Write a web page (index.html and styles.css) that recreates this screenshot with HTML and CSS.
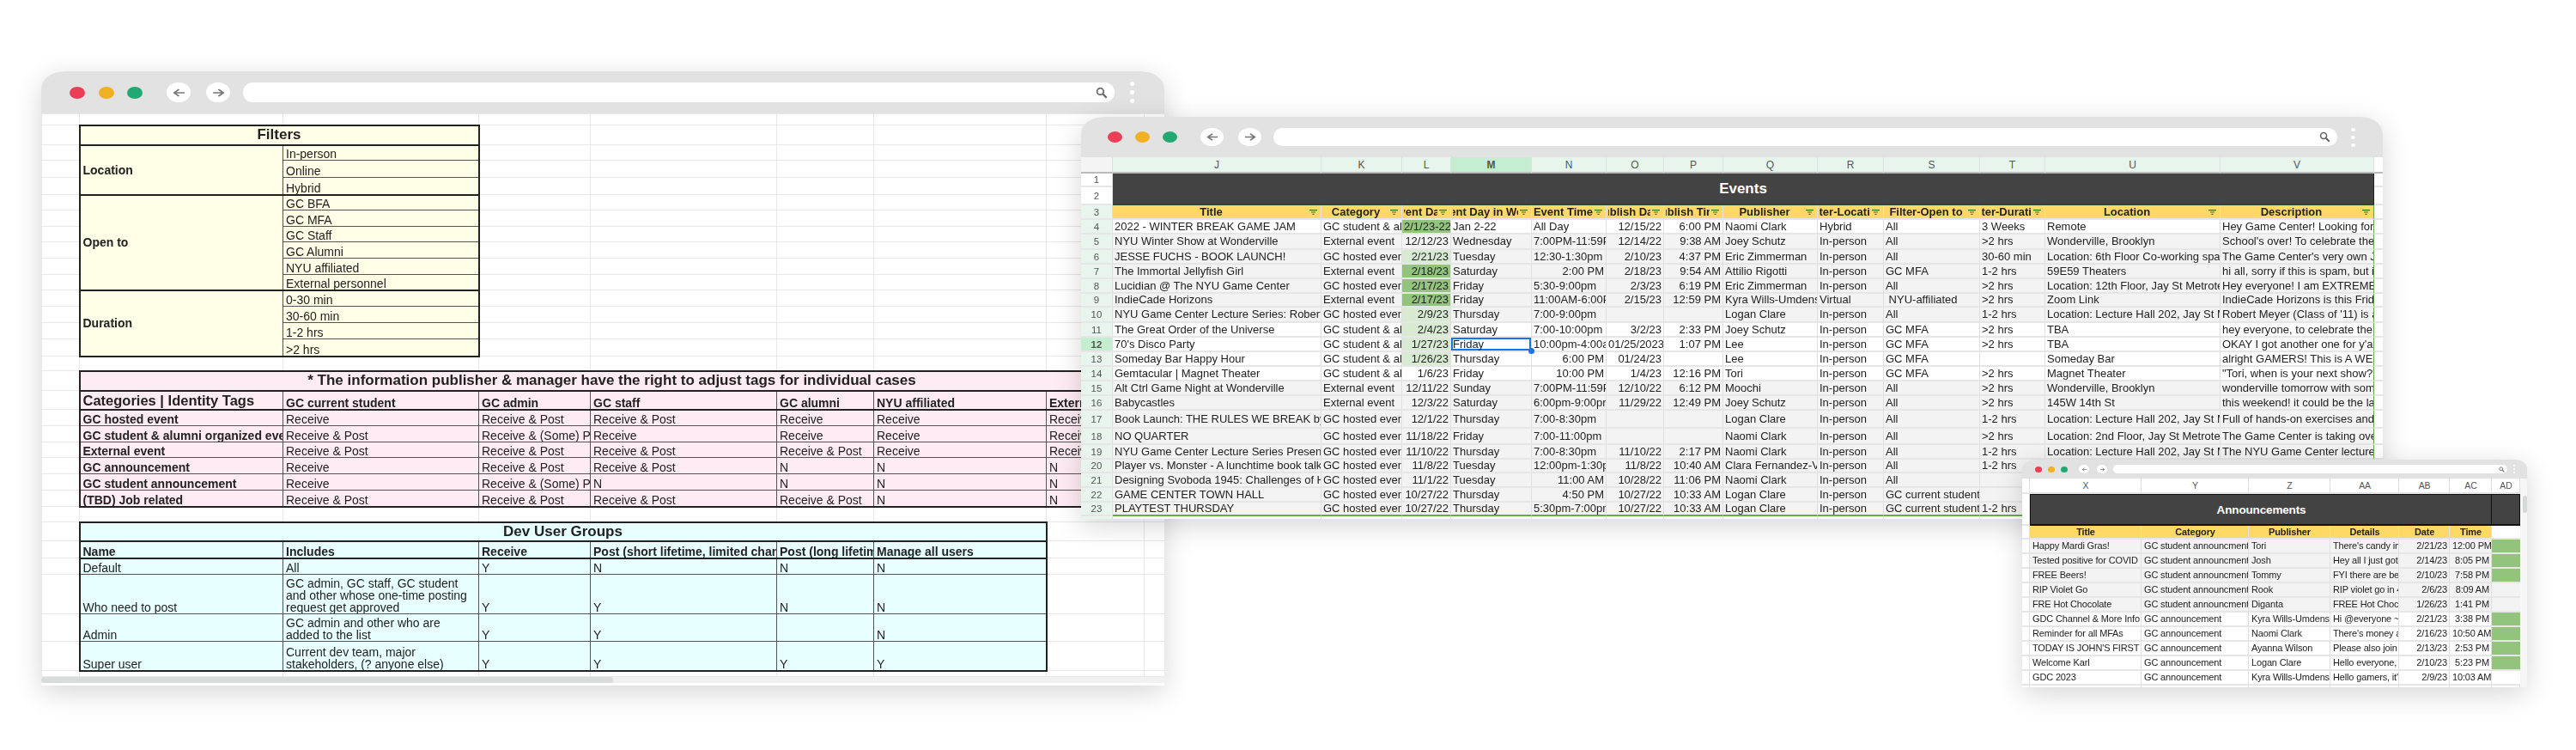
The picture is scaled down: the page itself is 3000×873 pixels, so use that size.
FILE: index.html
```html
<!DOCTYPE html>
<html lang="en">
  <head>
    <meta charset="UTF-8" />
    <title>Game Center spreadsheets</title>
    <link rel="stylesheet" href="styles.css">
  </head>
  <body>
    <svg class="defs" width="0" height="0">
      <symbol id="fn" viewBox="0 0 9 6"><path d="M0 .6h9M2 3h5M3.5 5.4h2" stroke="#38761d" stroke-width="1.1" fill="none"/></symbol>
      <symbol id="back" viewBox="0 0 24 24" preserveAspectRatio="none"><path d="M21 12H4M12 4l-8 8 8 8" stroke="#777" stroke-width="3" fill="none"/></symbol>
      <symbol id="fwd" viewBox="0 0 24 24" preserveAspectRatio="none"><path d="M3 12h17M12 4l8 8-8 8" stroke="#777" stroke-width="3" fill="none"/></symbol>
      <symbol id="search" viewBox="0 0 16 16"><circle cx="6.2" cy="6.2" r="4.3" stroke="#666" stroke-width="2" fill="none"/><path d="M9.5 9.5l5 5" stroke="#666" stroke-width="2.6"/></symbol>
    </svg>

    <div id="app">

      <!-- filters window -->
      <section class="win win-filters">
        <div class="bar">
          <i class="dot red"></i><i class="dot yellow"></i><i class="dot green"></i>
          <span class="nav first"><svg><use href="#back"/></svg></span>
          <span class="nav"><svg><use href="#fwd"/></svg></span>
          <div class="address"><svg><use href="#search"/></svg></div>
          <div class="kebab"><i></i><i></i><i></i></div>
        </div>
        <table class="sheet tags">
          <colgroup><col class="c0"><col class="c1"><col class="c2"><col class="c3"><col class="c4"><col class="c5"><col class="c6"><col class="c7"><col class="c8"></colgroup>
          <tr class="r13"><td></td><td></td><td></td><td></td><td></td><td></td><td></td><td></td><td></td></tr>
          <tr class="r23"><td></td><td class="d cream title top el er" colspan="2">Filters</td><td></td><td></td><td></td><td></td><td></td><td></td></tr>
          <tr class="r18"><td></td><td class="d cream b mid top el" rowspan="3">Location</td><td class="d cream top er">In-person</td><td></td><td></td><td></td><td></td><td></td><td></td></tr>
          <tr class="r20"><td></td><td class="d cream er">Online</td><td></td><td></td><td></td><td></td><td></td><td></td></tr>
          <tr class="r20"><td></td><td class="d cream er">Hybrid</td><td></td><td></td><td></td><td></td><td></td><td></td></tr>
          <tr class="r18"><td></td><td class="d cream b mid top el" rowspan="6">Open to</td><td class="d cream top er">GC BFA</td><td></td><td></td><td></td><td></td><td></td><td></td></tr>
          <tr class="r19"><td></td><td class="d cream er">GC MFA</td><td></td><td></td><td></td><td></td><td></td><td></td></tr>
          <tr class="r18"><td></td><td class="d cream er">GC Staff</td><td></td><td></td><td></td><td></td><td></td><td></td></tr>
          <tr class="r19"><td></td><td class="d cream er">GC Alumni</td><td></td><td></td><td></td><td></td><td></td><td></td></tr>
          <tr class="r19"><td></td><td class="d cream er">NYU affiliated</td><td></td><td></td><td></td><td></td><td></td><td></td></tr>
          <tr class="r18"><td></td><td class="d cream er">External personnel</td><td></td><td></td><td></td><td></td><td></td><td></td></tr>
          <tr class="r19"><td></td><td class="d cream b mid top el eb" rowspan="4">Duration</td><td class="d cream top er">0-30 min</td><td></td><td></td><td></td><td></td><td></td><td></td></tr>
          <tr class="r19"><td></td><td class="d cream er">30-60 min</td><td></td><td></td><td></td><td></td><td></td><td></td></tr>
          <tr class="r19"><td></td><td class="d cream er">1-2 hrs</td><td></td><td></td><td></td><td></td><td></td><td></td></tr>
          <tr class="r20"><td></td><td class="d cream er eb">&gt;2 hrs</td><td></td><td></td><td></td><td></td><td></td><td></td></tr>
          <tr class="r17"><td></td><td></td><td></td><td></td><td></td><td></td><td></td><td></td><td></td></tr>

          <tr class="r23"><td></td><td class="d pk title top el er" colspan="7">* The information publisher &amp; manager have the right to adjust tags for individual cases</td><td></td></tr>
          <tr class="r22"><td></td><td class="d pk big top el">Categories | Identity Tags</td><td class="d pk b top">GC current student</td><td class="d pk b top">GC admin</td><td class="d pk b top">GC staff</td><td class="d pk b top">GC alumni</td><td class="d pk b top">NYU affiliated</td><td class="d pk b top er">External personnel</td><td></td></tr>
          <tr class="r19 tp"><td></td><td class="d pk b el">GC hosted event</td><td class="d pk">Receive</td><td class="d pk">Receive &amp; Post</td><td class="d pk">Receive &amp; Post</td><td class="d pk">Receive</td><td class="d pk">Receive</td><td class="d pk er">Receive</td><td></td></tr>
          <tr class="r19"><td></td><td class="d pk b el">GC student &amp; alumni organized event</td><td class="d pk">Receive &amp; Post</td><td class="d pk">Receive &amp; (Some) Post</td><td class="d pk">Receive</td><td class="d pk">Receive</td><td class="d pk">Receive</td><td class="d pk er">Receive</td><td></td></tr>
          <tr class="r18"><td></td><td class="d pk b el">External event</td><td class="d pk">Receive &amp; Post</td><td class="d pk">Receive &amp; Post</td><td class="d pk">Receive &amp; Post</td><td class="d pk">Receive &amp; Post</td><td class="d pk">Receive</td><td class="d pk er">Receive</td><td></td></tr>
          <tr class="r19"><td></td><td class="d pk b el">GC announcement</td><td class="d pk">Receive</td><td class="d pk">Receive &amp; Post</td><td class="d pk">Receive &amp; Post</td><td class="d pk">N</td><td class="d pk">N</td><td class="d pk er">N</td><td></td></tr>
          <tr class="r19"><td></td><td class="d pk b el">GC student announcement</td><td class="d pk">Receive</td><td class="d pk">Receive &amp; (Some) Post</td><td class="d pk">N</td><td class="d pk">N</td><td class="d pk">N</td><td class="d pk er">N</td><td></td></tr>
          <tr class="r19"><td></td><td class="d pk b el eb">(TBD) Job related</td><td class="d pk eb">Receive &amp; Post</td><td class="d pk eb">Receive &amp; Post</td><td class="d pk eb">Receive &amp; Post</td><td class="d pk eb">Receive &amp; Post</td><td class="d pk eb">N</td><td class="d pk er eb">N</td><td></td></tr>
          <tr class="r18"><td></td><td></td><td></td><td></td><td></td><td></td><td></td><td></td><td></td></tr>

          <tr class="r22"><td></td><td class="d cy title top el er" colspan="6">Dev User Groups</td><td></td><td></td></tr>
          <tr class="r20"><td></td><td class="d cy b top el">Name</td><td class="d cy b top">Includes</td><td class="d cy b top">Receive</td><td class="d cy b top">Post (short lifetime, limited channels)</td><td class="d cy b top">Post (long lifetime)</td><td class="d cy b top er">Manage all users</td><td></td><td></td></tr>
          <tr class="r19 tp"><td></td><td class="d cy el">Default</td><td class="d cy">All</td><td class="d cy">Y</td><td class="d cy">N</td><td class="d cy">N</td><td class="d cy er">N</td><td></td><td></td></tr>
          <tr class="r46"><td></td><td class="d cy el">Who need to post</td><td class="d cy wrap">GC admin, GC staff, GC student and other whose one-time posting request get approved</td><td class="d cy">Y</td><td class="d cy">Y</td><td class="d cy">N</td><td class="d cy er">N</td><td></td><td></td></tr>
          <tr class="r32"><td></td><td class="d cy el">Admin</td><td class="d cy wrap">GC admin and other who are added to the list</td><td class="d cy">Y</td><td class="d cy">Y</td><td class="d cy"></td><td class="d cy er">N</td><td></td><td></td></tr>
          <tr class="r34"><td></td><td class="d cy el eb">Super user</td><td class="d cy wrap eb">Current dev team, major stakeholders, (? anyone else)</td><td class="d cy eb">Y</td><td class="d cy eb">Y</td><td class="d cy eb">Y</td><td class="d cy er eb">Y</td><td></td><td></td></tr>
          <tr class="r7"><td></td><td></td><td></td><td></td><td></td><td></td><td></td><td></td><td></td></tr>
        </table>
        <div class="scroll"><div class="thumb"></div></div>
      </section>

      <!-- events window -->
      <section class="win win-events">
        <div class="bar">
          <i class="dot red"></i><i class="dot yellow"></i><i class="dot green"></i>
          <span class="nav first"><svg><use href="#back"/></svg></span>
          <span class="nav"><svg><use href="#fwd"/></svg></span>
          <div class="address"><svg><use href="#search"/></svg></div>
          <div class="kebab"><i></i><i></i><i></i></div>
        </div>
        <table class="sheet events">
          <colgroup><col class="cn"><col class="cj"><col class="ck"><col class="cl"><col class="cm"><col class="cN"><col class="co"><col class="cp"><col class="cq"><col class="cR"><col class="cs"><col class="ct"><col class="cu"><col class="cv"><col class="cx"></colgroup>
          <tr class="letters"><td class="corner"></td><td>J</td><td>K</td><td>L</td><td class="on">M</td><td>N</td><td>O</td><td>P</td><td>Q</td><td>R</td><td>S</td><td>T</td><td>U</td><td>V</td><td class="blank"></td></tr>
          <tr class="b1"><td class="n">1</td><td class="banner" colspan="13" rowspan="2">Events</td><td class="blank"></td></tr>
          <tr class="b2"><td class="n">2</td><td class="blank"></td></tr>
          <tr class="heads">
            <td class="n">3</td>
            <td><div class="h"><span>Title</span><svg><use href="#fn"/></svg></div></td>
            <td><div class="h"><span>Category</span><svg><use href="#fn"/></svg></div></td>
            <td><div class="h"><span>Event Date</span><svg><use href="#fn"/></svg></div></td>
            <td><div class="h"><span>Event Day in Week</span><svg><use href="#fn"/></svg></div></td>
            <td><div class="h"><span>Event Time</span><svg><use href="#fn"/></svg></div></td>
            <td><div class="h"><span>Publish Date</span><svg><use href="#fn"/></svg></div></td>
            <td><div class="h"><span>Publish Time</span><svg><use href="#fn"/></svg></div></td>
            <td><div class="h"><span>Publisher</span><svg><use href="#fn"/></svg></div></td>
            <td><div class="h"><span>Filter-Location</span><svg><use href="#fn"/></svg></div></td>
            <td><div class="h"><span>Filter-Open to</span><svg><use href="#fn"/></svg></div></td>
            <td><div class="h"><span>Filter-Duration</span><svg><use href="#fn"/></svg></div></td>
            <td><div class="h"><span>Location</span><svg><use href="#fn"/></svg></div></td>
            <td class="edge"><div class="h"><span>Description</span><svg><use href="#fn"/></svg></div></td>
            <td class="blank"></td>
          </tr>
          <tr><td class="n">4</td><td>2022 - WINTER BREAK GAME JAM</td><td>GC student &amp; alumni organized event</td><td class="g1">2/1/23-22/1/23</td><td>Jan 2-22</td><td>All Day</td><td class="r">12/15/22</td><td class="r">6:00 PM</td><td>Naomi Clark</td><td>Hybrid</td><td>All</td><td>3 Weeks</td><td>Remote</td><td class="edge">Hey Game Center! Looking for something to do</td><td class="blank"></td></tr>
          <tr class="gy"><td class="n">5</td><td>NYU Winter Show at Wonderville</td><td>External event</td><td class="r">12/12/23</td><td>Wednesday</td><td>7:00PM-11:59PM</td><td class="r">12/14/22</td><td class="r">9:38 AM</td><td>Joey Schutz</td><td>In-person</td><td>All</td><td>&gt;2 hrs</td><td>Wonderville, Brooklyn</td><td class="edge">School's over! To celebrate the end of the year</td><td class="blank"></td></tr>
          <tr class="gy"><td class="n">6</td><td>JESSE FUCHS - BOOK LAUNCH!</td><td>GC hosted event</td><td class="r g2">2/21/23</td><td>Tuesday</td><td>12:30-1:30pm</td><td class="r">2/10/23</td><td class="r">4:37 PM</td><td>Eric Zimmerman</td><td>In-person</td><td>All</td><td>30-60 min</td><td>Location: 6th Floor Co-working space, Jay St Metrotech</td><td class="edge">The Game Center's very own Jesse Fuchs</td><td class="blank"></td></tr>
          <tr class="gy"><td class="n">7</td><td>The Immortal Jellyfish Girl</td><td>External event</td><td class="r g1">2/18/23</td><td>Saturday</td><td class="r">2:00 PM</td><td class="r">2/18/23</td><td class="r">9:54 AM</td><td>Attilio Rigotti</td><td>In-person</td><td>GC MFA</td><td>1-2 hrs</td><td>59E59 Theaters</td><td class="edge">hi all, sorry if this is spam, but i have a</td><td class="blank"></td></tr>
          <tr class="gy"><td class="n">8</td><td>Lucidian @ The NYU Game Center</td><td>GC hosted event</td><td class="r g1">2/17/23</td><td>Friday</td><td>5:30-9:00pm</td><td class="r">2/3/23</td><td class="r">6:19 PM</td><td>Eric Zimmerman</td><td>In-person</td><td>All</td><td>&gt;2 hrs</td><td>Location: 12th Floor, Jay St Metrotech</td><td class="edge">Hey everyone! I am EXTREMELY EXCITED</td><td class="blank"></td></tr>
          <tr class="gy"><td class="n">9</td><td>IndieCade Horizons</td><td>External event</td><td class="r g1">2/17/23</td><td>Friday</td><td>11:00AM-6:00PM</td><td class="r">2/15/23</td><td class="r">12:59 PM</td><td>Kyra Wills-Umdenstock</td><td>Virtual</td><td>&nbsp;NYU-affiliated</td><td>&gt;2 hrs</td><td>Zoom Link</td><td class="edge">IndieCade Horizons is this Friday, February</td><td class="blank"></td></tr>
          <tr class="gy"><td class="n">10</td><td>NYU Game Center Lecture Series: Robert Meyer, Lead</td><td>GC hosted event</td><td class="r g2">2/9/23</td><td>Thursday</td><td>7:00-9:00pm</td><td class="r"></td><td class="r"></td><td>Logan Clare</td><td>In-person</td><td>All</td><td>1-2 hrs</td><td>Location: Lecture Hall 202, Jay St Metrotech</td><td class="edge">Robert Meyer (Class of '11) is a Senior</td><td class="blank"></td></tr>
          <tr><td class="n">11</td><td>The Great Order of the Universe</td><td>GC student &amp; alumni organized event</td><td class="r g2">2/4/23</td><td>Saturday</td><td>7:00-10:00pm</td><td class="r">3/2/23</td><td class="r">2:33 PM</td><td>Joey Schutz</td><td>In-person</td><td>GC MFA</td><td>&gt;2 hrs</td><td>TBA</td><td class="edge">hey everyone, to celebrate the new show</td><td class="blank"></td></tr>
          <tr><td class="n on">12</td><td>70's Disco Party</td><td>GC student &amp; alumni organized event</td><td class="r g2">1/27/23</td><td class="sel">Friday</td><td>10:00pm-4:00am</td><td class="r">01/25/2023</td><td class="r">1:07 PM</td><td>Lee</td><td>In-person</td><td>GC MFA</td><td>&gt;2 hrs</td><td>TBA</td><td class="edge">OKAY I got another one for y'all - did you</td><td class="blank"></td></tr>
          <tr><td class="n">13</td><td>Someday Bar Happy Hour</td><td>GC student &amp; alumni organized event</td><td class="r g2">1/26/23</td><td>Thursday</td><td class="r">6:00 PM</td><td class="r">01/24/23</td><td class="r"></td><td>Lee</td><td>In-person</td><td>GC MFA</td><td></td><td>Someday Bar</td><td class="edge">alright GAMERS! This is A WEEK, 2023</td><td class="blank"></td></tr>
          <tr><td class="n">14</td><td>Gemtacular | Magnet Theater</td><td>GC student &amp; alumni organized event</td><td class="r">1/6/23</td><td>Friday</td><td class="r">10:00 PM</td><td class="r">1/4/23</td><td class="r">12:16 PM</td><td>Tori</td><td>In-person</td><td>GC MFA</td><td>&gt;2 hrs</td><td>Magnet Theater</td><td class="edge">"Tori, when is your next show?" This Friday</td><td class="blank"></td></tr>
          <tr class="gy"><td class="n">15</td><td>Alt Ctrl Game Night at Wonderville</td><td>External event</td><td class="r">12/11/22</td><td>Sunday</td><td>7:00PM-11:59PM</td><td class="r">12/10/22</td><td class="r">6:12 PM</td><td>Moochi</td><td>In-person</td><td>All</td><td>&gt;2 hrs</td><td>Wonderville, Brooklyn</td><td class="edge">wonderville tomorrow with some alt ctrl games</td><td class="blank"></td></tr>
          <tr class="gy"><td class="n">16</td><td>Babycastles</td><td>External event</td><td class="r">12/3/22</td><td>Saturday</td><td>6:00pm-9:00pm</td><td class="r">11/29/22</td><td class="r">12:49 PM</td><td>Joey Schutz</td><td>In-person</td><td>All</td><td>&gt;2 hrs</td><td>145W 14th St</td><td class="edge">this weekend! it could be the last one?</td><td class="blank"></td></tr>
          <tr class="gy"><td class="n">17</td><td>Book Launch: THE RULES WE BREAK by Eric Zimmerman</td><td>GC hosted event</td><td class="r">12/1/22</td><td>Thursday</td><td>7:00-8:30pm</td><td class="r"></td><td class="r"></td><td>Logan Clare</td><td>In-person</td><td>All</td><td>1-2 hrs</td><td>Location: Lecture Hall 202, Jay St Metrotech</td><td class="edge">Full of hands-on exercises and thought</td><td class="blank"></td></tr>
          <tr class="gy"><td class="n">18</td><td>NO QUARTER</td><td>GC hosted event</td><td class="r">11/18/22</td><td>Friday</td><td>7:00-11:00pm</td><td class="r"></td><td class="r"></td><td>Naomi Clark</td><td>In-person</td><td>All</td><td>&gt;2 hrs</td><td>Location: 2nd Floor, Jay St Metrotech</td><td class="edge">The Game Center is taking over the 2nd</td><td class="blank"></td></tr>
          <tr class="gy"><td class="n">19</td><td>NYU Game Center Lecture Series Presents Sam Roberts</td><td>GC hosted event</td><td class="r">11/10/22</td><td>Thursday</td><td>7:00-8:30pm</td><td class="r">11/10/22</td><td class="r">2:17 PM</td><td>Naomi Clark</td><td>In-person</td><td>All</td><td>1-2 hrs</td><td>Location: Lecture Hall 202, Jay St Metrotech</td><td class="edge">The NYU Game Center lecture series</td><td class="blank"></td></tr>
          <tr class="gy"><td class="n">20</td><td>Player vs. Monster - A lunchtime book talk with Jaroslav</td><td>GC hosted event</td><td class="r">11/8/22</td><td>Tuesday</td><td>12:00pm-1:30pm</td><td class="r">11/8/22</td><td class="r">10:40 AM</td><td>Clara Fernandez-Vara</td><td>In-person</td><td>All</td><td>1-2 hrs</td><td></td><td class="edge"></td><td class="blank"></td></tr>
          <tr class="gy"><td class="n">21</td><td>Designing Svoboda 1945: Challenges of Historical Games</td><td>GC hosted event</td><td class="r">11/1/22</td><td>Tuesday</td><td class="r">11:00 AM</td><td class="r">10/28/22</td><td class="r">11:06 PM</td><td>Naomi Clark</td><td>In-person</td><td>All</td><td></td><td></td><td class="edge"></td><td class="blank"></td></tr>
          <tr class="gy"><td class="n">22</td><td>GAME CENTER TOWN HALL</td><td>GC hosted event</td><td class="r">10/27/22</td><td>Thursday</td><td class="r">4:50 PM</td><td class="r">10/27/22</td><td class="r">10:33 AM</td><td>Logan Clare</td><td>In-person</td><td>GC current student; GC MFA</td><td></td><td></td><td class="edge"></td><td class="blank"></td></tr>
          <tr class="gy last"><td class="n">23</td><td>PLAYTEST THURSDAY</td><td>GC hosted event</td><td class="r">10/27/22</td><td>Thursday</td><td>5:30pm-7:00pm</td><td class="r">10/27/22</td><td class="r">10:33 AM</td><td>Logan Clare</td><td>In-person</td><td>GC current student; GC MFA</td><td>1-2 hrs</td><td></td><td class="edge"></td><td class="blank"></td></tr>
          <tr class="tail"><td class="n"></td><td></td><td></td><td></td><td></td><td></td><td></td><td></td><td></td><td></td><td></td><td></td><td></td><td></td><td class="blank"></td></tr>
        </table>
      </section>

      <!-- announcements window -->
      <section class="win win-news">
        <div class="bar">
          <i class="dot red"></i><i class="dot yellow"></i><i class="dot green"></i>
          <span class="nav first"><svg><use href="#back"/></svg></span>
          <span class="nav"><svg><use href="#fwd"/></svg></span>
          <div class="address"><svg><use href="#search"/></svg></div>
          <div class="kebab"><i></i><i></i><i></i></div>
        </div>
        <div class="news-body">
          <table class="sheet news">
            <colgroup><col class="ng"><col class="nx"><col class="ny"><col class="nz"><col class="naa"><col class="nab"><col class="nac"><col class="nad"></colgroup>
            <tr class="letters"><td></td><td>X</td><td>Y</td><td>Z</td><td>AA</td><td>AB</td><td>AC</td><td>AD</td></tr>
            <tr class="ban"><td></td><td class="banner" colspan="6">Announcements</td><td class="banner side"></td></tr>
            <tr class="heads"><td></td><td>Title</td><td>Category</td><td>Publisher</td><td>Details</td><td>Date</td><td>Time</td><td class="plain"></td></tr>
            <tr class="gy"><td></td><td>Happy Mardi Gras!</td><td>GC student announcment</td><td>Tori</td><td>There's candy in the lounge</td><td class="r">2/21/23</td><td class="r">12:00 PM</td><td class="g1 plain"></td></tr>
            <tr class="gy"><td></td><td>Tested positive for COVID</td><td>GC student announcment</td><td>Josh</td><td>Hey all I just got a positive</td><td class="r">2/14/23</td><td class="r">8:05 PM</td><td class="g1 plain"></td></tr>
            <tr class="gy"><td></td><td>FREE Beers!</td><td>GC student announcment</td><td>Tommy</td><td>FYI there are beers</td><td class="r">2/10/23</td><td class="r">7:58 PM</td><td class="g1 plain"></td></tr>
            <tr class="gy"><td></td><td>RIP Violet Go</td><td>GC student announcment</td><td>Rook</td><td>RIP violet go in 4</td><td class="r">2/6/23</td><td class="r">8:09 AM</td><td class="plain"></td></tr>
            <tr class="gy"><td></td><td>FRE Hot Chocolate</td><td>GC student announcment</td><td>Diganta</td><td>FREE Hot Chocolate</td><td class="r">1/26/23</td><td class="r">1:41 PM</td><td class="plain"></td></tr>
            <tr><td></td><td>GDC Channel &amp; More Info</td><td>GC announcement</td><td>Kyra Wills-Umdenstock</td><td>Hi @everyone ~</td><td class="r">2/21/23</td><td class="r">3:38 PM</td><td class="g1 plain"></td></tr>
            <tr><td></td><td>Reminder for all MFAs</td><td>GC announcement</td><td>Naomi Clark</td><td>There's money available</td><td class="r">2/16/23</td><td class="r">10:50 AM</td><td class="g1 plain"></td></tr>
            <tr><td></td><td>TODAY IS JOHN'S FIRST</td><td>GC announcement</td><td>Ayanna Wilson</td><td>Please also join</td><td class="r">2/13/23</td><td class="r">2:53 PM</td><td class="g1 plain"></td></tr>
            <tr><td></td><td>Welcome Karl</td><td>GC announcement</td><td>Logan Clare</td><td>Hello everyone,</td><td class="r">2/10/23</td><td class="r">5:23 PM</td><td class="g1 plain"></td></tr>
            <tr><td></td><td>GDC 2023</td><td>GC announcement</td><td>Kyra Wills-Umdenstock</td><td>Hello gamers, it's</td><td class="r">2/9/23</td><td class="r">10:03 AM</td><td class="plain"></td></tr>
            <tr class="tail"><td></td><td></td><td></td><td></td><td></td><td></td><td></td><td></td></tr>
          </table>
          <div class="vscroll"><div class="vthumb"></div></div>
        </div>
      </section>

    </div>
  </body>
</html>
```

FILE: styles.css
```css
body {
  margin: 0;
  background: #fff;
  font-family: "Liberation Sans", Arial, sans-serif;
  color: #222;
}

.defs {
  position: absolute;
}

#app {
  position: relative;
  width: 3000px;
  height: 873px;
  overflow: hidden;
}

/* windows */
.win {
  position: absolute;
  background: #fff;
  box-shadow: 0 8px 32px rgba(0, 0, 0, 0.16);
  overflow: hidden;
}

.win-filters {
  left: 48px;
  top: 83px;
  width: 1308px;
  height: 715px;
  border-radius: 28px 28px 0 0 / 20px 20px 0 0;
}

.win-events {
  left: 1259px;
  top: 136px;
  width: 1516px;
  height: 468px;
  border-radius: 26px 26px 0 0 / 20px 20px 0 0;
}

.win-news {
  left: 2355px;
  top: 535px;
  width: 588px;
  height: 265px;
  border-radius: 14px 14px 0 0 / 10px 10px 0 0;
}

/* browser bar */
.bar {
  display: flex;
  align-items: center;
  background: #e2e2e2;
}

.dot {
  display: block;
  border-radius: 50%;
}

.red { background: #ea3f56; }
.yellow { background: #f2b024; }
.green { background: #22a873; }

.nav {
  display: flex;
  align-items: center;
  justify-content: center;
  background: #fff;
  border-radius: 50%;
}

.address {
  flex: 1;
  display: flex;
  align-items: center;
  justify-content: flex-end;
  background: #fff;
  border-radius: 12px;
}

.kebab {
  display: flex;
  flex-direction: column;
  align-items: center;
}

.kebab i {
  display: block;
  background: #fff;
  border-radius: 50%;
}

.win-filters .bar { height: 49px; padding: 0 35px 0 33px; }
.win-filters .dot { width: 18px; height: 14px; margin-right: 15.5px; }
.win-filters .dot.green { margin-right: 0; }
.win-filters .nav { width: 28px; height: 23px; margin-right: 18px; }
.win-filters .nav.first { margin-left: 28px; }
.win-filters .nav svg { width: 17px; height: 12px; }
.win-filters .nav + .address { margin-left: -3px; }
.win-filters .address { height: 23px; margin-right: 17px; padding-right: 7px; }
.win-filters .address svg { width: 16px; height: 14px; }
.win-filters .kebab { width: 6px; gap: 5px; }
.win-filters .kebab i { width: 5px; height: 5px; }

.win-events .bar { height: 47px; padding: 0 32px 0 31px; }
.win-events .dot { width: 17px; height: 13px; margin-right: 15px; }
.win-events .dot.green { margin-right: 0; }
.win-events .nav { width: 27px; height: 21px; margin-right: 17px; }
.win-events .nav.first { margin-left: 27px; }
.win-events .nav svg { width: 16px; height: 11px; }
.win-events .nav + .address { margin-left: -3px; }
.win-events .address { height: 21px; margin-right: 15px; padding-right: 7px; }
.win-events .address svg { width: 15px; height: 13px; }
.win-events .kebab { width: 6px; gap: 5px; }
.win-events .kebab i { width: 5px; height: 4px; }

.win-news .bar { height: 22px; padding: 0 14px 0 15px; }
.win-news .dot { width: 8px; height: 7px; margin-right: 7px; }
.win-news .dot.green { margin-right: 0; }
.win-news .nav { width: 12px; height: 10px; margin-right: 9px; }
.win-news .nav.first { margin-left: 13px; }
.win-news .nav svg { width: 7px; height: 5px; }
.win-news .nav + .address { margin-left: -2px; }
.win-news .address { height: 10px; margin-right: 6px; padding-right: 3px; border-radius: 6px; }
.win-news .address svg { width: 7px; height: 7px; }
.win-news .kebab { width: 3px; gap: 2px; }
.win-news .kebab i { width: 2px; height: 2px; }

/* sheets */
.sheet {
  table-layout: fixed;
  width: 100%;
  filter: blur(0.35px);
}

.sheet td {
  padding: 0 2px;
  white-space: nowrap;
  overflow: hidden;
}

/* filters sheet */
.tags {
  border-collapse: collapse;
  font-family: "Liberation Sans Narrow", "Liberation Sans", Arial, sans-serif;
  font-size: 14px;
}

.c0 { width: 44px; }
.c1 { width: 237px; }
.c2 { width: 228px; }
.c3 { width: 130px; }
.c4 { width: 217px; }
.c5 { width: 113px; }
.c6 { width: 201px; }
.c7 { width: 114px; }
.c8 { width: 24px; }

.r7 { height: 7px; }
.r13 { height: 13px; }
.r17 { height: 17px; }
.r18 { height: 18px; }
.r19 { height: 19px; }
.r20 { height: 20px; }
.r22 { height: 22px; }
.r23 { height: 23px; }
.r32 { height: 32px; }
.r34 { height: 34px; }
.r46 { height: 46px; }

.tags td {
  border: 1px solid #e8e8e8;
  line-height: 14px;
  padding: 0 3px;
  vertical-align: bottom;
}

.tags td.d { border: 1px solid #555; }
.tags td.top { border-top: 2px solid #222; }
.tags .tp td.d { border-top: 2px solid #222; }
.tags td.el { border-left: 2px solid #222; }
.tags td.er { border-right: 2px solid #222; }
.tags td.eb { border-bottom: 2px solid #222; }

.cream { background: #ffffe8; }
.pk { background: #feebf3; }
.cy { background: #e7ffff; }

.b { font-weight: bold; }
.tags td.mid { vertical-align: middle; }
.tags td.wrap { white-space: normal; }

.tags td.title {
  font-size: 17px;
  font-weight: bold;
  text-align: center;
  vertical-align: middle;
}

.tags td.big {
  font-size: 16.5px;
  font-weight: bold;
  vertical-align: middle;
}

.scroll {
  height: 7px;
  background: #f1f1f1;
}

.thumb {
  width: 666px;
  height: 7px;
  border-radius: 3px;
  background: #dadcdc;
}

/* events sheet */
.events,
.news {
  border-collapse: separate;
  border-spacing: 0;
}

.events {
  font-family: "Liberation Sans Narrow", "Liberation Sans", Arial, sans-serif;
  font-size: 13px;
}

.cn { width: 37px; }
.cj { width: 243px; }
.ck { width: 94px; }
.cl { width: 57px; }
.cm { width: 94px; }
.cN { width: 87px; }
.co { width: 67px; }
.cp { width: 69px; }
.cq { width: 110px; }
.cR { width: 77px; }
.cs { width: 112px; }
.ct { width: 76px; }
.cu { width: 204px; }
.cv { width: 179px; }
.cx { width: 10px; }

.events tr { height: 17px; }
.events tr:nth-child(6),
.events tr:nth-child(11) { height: 18px; }
.events tr:nth-child(10),
.events tr:nth-child(21),
.events tr:nth-child(24) { height: 16px; }
.events tr:nth-child(18) { height: 21px; }
.events tr:nth-child(19) { height: 19px; }

.events td {
  box-sizing: border-box;
  line-height: 14px;
  border-right: 1px solid #e0e0e0;
  border-bottom: 2px solid #e6e6e6;
  vertical-align: middle;
}

.events .gy td { background: #f3f3f3; }
.events .gy td.n,
.events td.n { background: #e8f5ec; text-align: center; color: #555; font-size: 11.5px; }
.events .b1 td.n,
.events .b2 td.n { background: #fff; }
.events td.n.on { background: #c3eecf; font-weight: bold; }
.events .gy td.blank,
.events td.blank { background: #fff; border-right: 0; }
.events td.edge { border-right: 1px solid #6aa84f; }

.events .last td { border-bottom: 2px solid #6aa84f; }
.events .last td.n,
.events .last td.blank { border-bottom: 2px solid #e6e6e6; }
.events .tail td { height: 5px; border-bottom: 0; }

.events tr.letters { height: 19px; }
.letters td {
  background: #e8f5ec;
  text-align: center;
  color: #555;
  font-size: 12px;
  border-bottom: 2px solid #bbb;
}
.events .letters td.on { background: #c3eecf; font-weight: bold; }
.events .letters td.corner { background: #f4f4f4; }
.events .letters td.blank { background: #fff; }

.events tr.b1 { height: 16px; }
.events tr.b2 { height: 21px; }
.events td.banner {
  background: #434343;
  color: #fff;
  font-size: 17px;
  font-weight: bold;
  text-align: center;
  border-right: 1px solid #222;
  border-bottom: 2px solid #274e13;
}

.heads td {
  background: #ffd966;
  font-weight: bold;
}

.events .heads td.n,
.events .heads td.blank { font-weight: normal; }

.h {
  display: flex;
  align-items: center;
  gap: 2px;
}

.h span {
  flex: 1;
  min-width: 0;
  display: flex;
  justify-content: center;
  overflow: hidden;
}

.h svg {
  flex: none;
  width: 9px;
  height: 6px;
  margin-right: 2px;
}

.g1 { background: #93c47d; }
.g2 { background: #d9ead3; }
.events .gy td.g1 { background: #93c47d; }
.events .gy td.g2 { background: #d9ead3; }
.r { text-align: right; }
.events td.r { text-align: right; }

.events td.sel {
  position: relative;
  overflow: visible;
  box-shadow: inset 0 0 0 2px #1a73e8;
}

.events td.sel::after {
  content: "";
  position: absolute;
  right: -4px;
  bottom: -4px;
  width: 7px;
  height: 7px;
  border-radius: 50%;
  background: #1a73e8;
}

/* announcements sheet */
.news-body {
  display: flex;
}

.news {
  flex: none;
  width: 580px;
  font-size: 11px;
  letter-spacing: -0.15px;
}

.ng { width: 9px; }
.nx { width: 130px; }
.ny { width: 125px; }
.nz { width: 95px; }
.naa { width: 80px; }
.nab { width: 59px; }
.nac { width: 49px; }
.nad { width: 33px; }

.news tr { height: 17px; }
.news td {
  box-sizing: border-box;
  line-height: 13px;
  border-right: 1px solid #e0e0e0;
  border-bottom: 2px solid #e6e6e6;
  vertical-align: middle;
  padding: 0 2px 0 3px;
}

.news .gy td { background: #f3f3f3; }
.news .gy td:first-child,
.news td:first-child { background: #fff; padding: 0; }
.news .gy td.g1,
.news td.g1 { background: #93c47d; }
.news td.plain { border-right: 0; }
.news td.r { text-align: right; }

.news tr.letters { height: 18px; }
.news .letters td { background: #fff; font-size: 10.5px; color: #555; }

.news tr.ban { height: 37px; }
.news td.banner {
  background: #434343;
  color: #fff;
  font-size: 13.5px;
  font-weight: bold;
  text-align: center;
  border: 1px solid #111;
  border-bottom: 2px solid #111;
}
.news td.banner.side { border-left: 0; }

.news tr.heads { height: 16px; }
.news .heads td { text-align: center; background: #ffd966; }
.news .heads td:first-child,
.news .heads td.plain { background: #fff; }
.news .tail td { height: 4px; border-bottom: 0; }

.vscroll {
  flex: 1;
  background: #f6f6f6;
  padding: 20px 0 0 3px;
}

.vthumb {
  width: 5px;
  height: 20px;
  border-radius: 3px;
  background: #d5d8d8;
}
```
